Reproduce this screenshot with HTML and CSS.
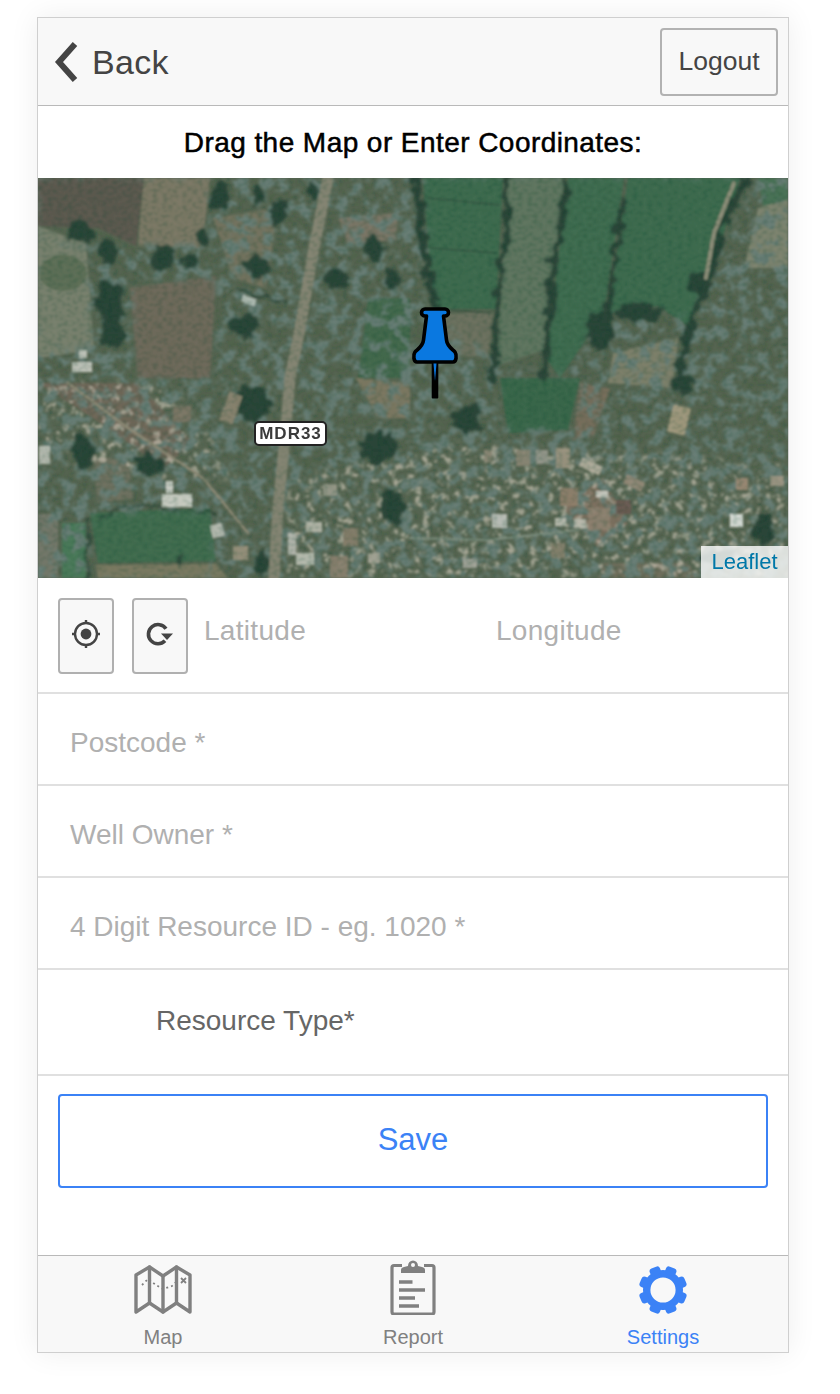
FILE: index.html
```html
<!DOCTYPE html>
<html lang="en">
<head>
<meta charset="utf-8">
<title>Add Resource</title>
<link rel="stylesheet" href="styles.css">
</head>
<body>
<div class="card">
  <header class="topbar">
    <a class="back">
      <svg class="back-icon" viewBox="0 0 26 44" width="26" height="44"><path d="M21 4 L5 22 L21 40" fill="none" stroke="#444" stroke-width="6"/></svg>
      <span>Back</span>
    </a>
    <button class="logout">Logout</button>
  </header>
  <h1 class="title">Drag the Map or Enter Coordinates:</h1>
  <div class="map">
    <svg class="sat" viewBox="0 0 750 400" width="750" height="400" preserveAspectRatio="none">
      <defs>
        <filter id="b1" x="-2%" y="-2%" width="104%" height="104%"><feGaussianBlur stdDeviation="1.1"/></filter>
        <filter id="b2" x="-20%" y="-20%" width="140%" height="140%"><feGaussianBlur stdDeviation="3.5"/></filter>
        <filter id="organic" x="-5%" y="-5%" width="110%" height="110%">
          <feTurbulence type="fractalNoise" baseFrequency="0.09" numOctaves="2" seed="11" result="n"/>
          <feDisplacementMap in="SourceGraphic" in2="n" scale="16" xChannelSelector="R" yChannelSelector="G"/>
          <feGaussianBlur stdDeviation="1.2"/>
        </filter>
        <filter id="dark" x="0" y="0" width="100%" height="100%">
          <feTurbulence type="fractalNoise" baseFrequency="0.08" numOctaves="4" seed="7"/>
          <feColorMatrix type="matrix" values="0 0 0 0 0.14  0 0 0 0 0.21  0 0 0 0 0.18  6 0 0 0 -2.85"/>
        </filter>
        <filter id="light" x="0" y="0" width="100%" height="100%">
          <feTurbulence type="fractalNoise" baseFrequency="0.13" numOctaves="3" seed="21"/>
          <feColorMatrix type="matrix" values="0 0 0 0 0.58  0 0 0 0 0.53  0 0 0 0 0.44  0 6 0 0 -3.2"/>
        </filter>
        <filter id="fine" x="0" y="0" width="100%" height="100%">
          <feTurbulence type="fractalNoise" baseFrequency="0.2 0.35" numOctaves="2" seed="3"/>
          <feColorMatrix type="matrix" values="0 0 0 0 0  0 0 0 0 0.05  0 0 0 0 0.02  0 0 4 0 -1.8"/>
        </filter>
        <mask id="treeMask">
          <rect width="750" height="400" fill="#fff"/>
          <g fill="#000" filter="url(#b2)">
            <polygon points="0,0 170,0 170,66 0,66"/>
            <polygon points="96,102 178,102 178,200 96,200"/>
            <polygon points="385,0 720,0 672,100 650,140 570,135 520,200 460,185 395,130"/>
            <polygon points="52,335 172,335 172,400 52,400"/>
            <polygon points="462,200 542,200 542,250 462,250"/>
            <polygon points="0,70 50,70 50,170 0,170"/>
          </g>
        </mask>
        <mask id="villageMask">
          <rect width="750" height="400" fill="#000"/>
          <g fill="#fff" filter="url(#b2)">
            <polygon points="420,265 750,285 750,400 250,400 250,300"/>
            <polygon points="0,205 130,205 200,300 120,300 0,280"/>
          </g>
        </mask>
      </defs>
      <rect width="750" height="400" fill="#566551"/>
      <g filter="url(#b1)">
        <g>
          <polygon points="0,0 106,0 98,68 60,50 0,48" fill="#5d5a50"/>
          <polygon points="106,0 172,0 164,70 100,68" fill="#7d7966"/>
          <polygon points="0,48 48,66 56,172 0,180" fill="#79816e"/>
          <ellipse cx="25" cy="95" rx="24" ry="18" fill="#5f7058"/>
          <polygon points="92,110 178,98 172,200 100,200" fill="#6f6a5b"/>
          <polygon points="175,40 240,30 228,110 195,100" fill="#74735f"/>
          <polygon points="300,40 360,35 358,62 310,66" fill="#7b7666"/>
          <polygon points="330,120 372,120 372,200 320,200" fill="#44694d"/>
          <polygon points="318,200 372,205 372,240 340,240" fill="#7d7862"/>
          <polygon points="385,0 465,0 458,131 395,131" fill="#3f6c50"/>
          <polygon points="470,0 527,0 506,172 458,188" fill="#607660"/>
          <polygon points="530,0 586,0 566,135 522,200 508,180" fill="#416d51"/>
          <polygon points="590,0 702,0 672,102 650,148 620,128 570,135" fill="#3f6c50"/>
          <polygon points="720,30 750,20 750,90 706,90" fill="#7e8470"/>
          <polygon points="720,0 750,0 750,22 725,28" fill="#4a7256"/>
          <polygon points="395,135 455,135 450,180 400,175" fill="#6e7260"/>
          <polygon points="575,175 640,160 635,210 570,205" fill="#7e806b"/>
          <polygon points="462,200 542,200 530,252 470,255" fill="#3b684b"/>
          <polygon points="542,205 572,210 556,258 535,262" fill="#776e5c"/>
          <polygon points="52,335 172,330 178,383 60,385" fill="#426d50"/>
          <polygon points="58,387 178,386 190,400 60,400" fill="#7b7a62"/>
          <polygon points="0,336 20,336 20,400 0,400" fill="#74786a"/>
          <polygon points="24,345 48,345 48,400 24,400" fill="#4b7a5a"/>
          <polygon points="0,205 100,205 155,265 125,290 70,250" fill="#6f6758"/>
          <polygon points="55,280 90,280 95,320 60,325" fill="#6f7160"/>
          <polygon points="565,385 650,385 660,400 560,400" fill="#6f6e5c"/>
          <polygon points="525,330 565,300 590,345 560,370" fill="#7d705f"/>
        </g>
        <rect width="750" height="400" filter="url(#light)" mask="url(#villageMask)" opacity=".7"/>
        <rect width="750" height="400" filter="url(#dark)" mask="url(#treeMask)"/>
        <g filter="url(#organic)" fill="#2b4539">
          <ellipse cx="42" cy="53" rx="15" ry="11"/><ellipse cx="125" cy="80" rx="11" ry="13"/><ellipse cx="152" cy="83" rx="8" ry="8"/>
          <ellipse cx="164" cy="60" rx="6" ry="9"/><ellipse cx="182" cy="17" rx="9" ry="15"/><ellipse cx="219" cy="17" rx="6" ry="10"/>
          <ellipse cx="240" cy="33" rx="8" ry="12"/><ellipse cx="275" cy="13" rx="5" ry="12"/><ellipse cx="219" cy="90" rx="12" ry="11"/>
          <ellipse cx="69" cy="73" rx="10" ry="12"/><ellipse cx="72" cy="123" rx="15" ry="20"/><ellipse cx="75" cy="155" rx="12" ry="18"/>
          <ellipse cx="205" cy="147" rx="15" ry="11"/><ellipse cx="335" cy="70" rx="9" ry="13"/><ellipse cx="299" cy="100" rx="12" ry="10"/>
          <ellipse cx="355" cy="103" rx="8" ry="9"/><ellipse cx="562" cy="152" rx="14" ry="20"/><ellipse cx="662" cy="107" rx="11" ry="13"/>
          <ellipse cx="600" cy="135" rx="24" ry="8"/><ellipse cx="430" cy="240" rx="14" ry="13"/><ellipse cx="645" cy="205" rx="12" ry="9"/>
          <ellipse cx="215" cy="225" rx="18" ry="17"/><ellipse cx="680" cy="380" rx="18" ry="7"/><ellipse cx="725" cy="350" rx="12" ry="16"/>
          <ellipse cx="45" cy="275" rx="10" ry="20"/><ellipse cx="340" cy="270" rx="20" ry="16"/><ellipse cx="355" cy="330" rx="12" ry="16"/>
          <ellipse cx="112" cy="286" rx="14" ry="10"/><ellipse cx="143" cy="382" rx="4" ry="6"/><ellipse cx="225" cy="385" rx="7" ry="15"/>
          <g fill="none" stroke="#2b4539" stroke-linecap="round" stroke-linejoin="round">
            <polyline stroke-width="6" points="469,0 469,60 462,83 459,133 455,200"/>
            <polyline stroke-width="7" points="529,0 525,37 515,83 512,133 505,200"/>
            <polyline stroke-width="6" points="585,23 579,60 572,113 569,133"/>
            <polyline stroke-width="8" points="379,0 385,67 395,117 400,135"/>
            <polyline stroke-width="8" points="709,0 682,50 675,93 655,140 639,200"/>
            <polyline stroke-width="3" points="200,112 250,125"/>
            <polyline stroke-width="2" points="60,340 90,325 130,332 175,335"/>
            <polyline stroke-width="3" points="50,340 50,400"/>
          </g>
        </g>
        <g fill="none" stroke="#33503f" stroke-width="1.4" opacity=".8">
          <polyline points="389,20 462,27"/><polyline points="392,70 459,75"/><polyline points="412,132 452,135"/>
        </g>
        <g fill="none" stroke-linecap="round">
          <polyline stroke="#858573" stroke-width="11" points="290,0 276,70 262,150 252,200 247,260 240,330 236,400"/>
          <polyline stroke="#8f8a76" stroke-width="2.5" points="30,205 90,250 165,300 210,355"/>
          <polyline stroke="#8f8f7a" stroke-width="4" points="696,5 676,55 668,100"/>
          <polyline stroke="#7f8f80" stroke-width="2" points="372,360 450,362 540,352"/>
        </g>
        <g opacity=".9">
          <rect x="632" y="228" width="18" height="28" rx="2" fill="#a89d82" transform="rotate(14 641 242)"/>
          <rect x="454" y="336" width="15" height="14" fill="#c3c6bf"/>
          <rect x="692" y="336" width="13" height="13" fill="#e4e7e2"/>
          <rect x="542" y="284" width="22" height="9" fill="#b8b3a2" transform="rotate(25 553 288)"/>
          <rect x="518" y="270" width="14" height="20" fill="#9f9682"/>
          <rect x="478" y="272" width="14" height="16" fill="#8d8775"/>
          <rect x="498" y="272" width="12" height="14" fill="#97998e"/>
          <rect x="586" y="300" width="20" height="10" fill="#988c7a" transform="rotate(25 596 305)"/>
          <rect x="698" y="300" width="12" height="12" fill="#a08c76"/>
          <rect x="732" y="298" width="14" height="10" fill="#a39a88"/>
          <rect x="558" y="313" width="12" height="6" fill="#cfcfc6"/>
          <rect x="522" y="310" width="18" height="18" fill="#93826e"/>
          <rect x="517" y="340" width="11" height="8" fill="#bfc0b4"/>
          <rect x="536" y="341" width="12" height="9" fill="#bfc0b4"/>
          <rect x="550" y="330" width="22" height="22" fill="#8f8270"/>
          <rect x="578" y="322" width="15" height="14" fill="#6d5a52"/>
          <rect x="513" y="365" width="14" height="15" fill="#88836f"/>
          <rect x="425" y="381" width="14" height="9" fill="#a6a89e"/>
          <rect x="446" y="272" width="8" height="12" fill="#8f8a78"/>
          <rect x="124" y="316" width="30" height="13" fill="#d4d6cd"/>
          <rect x="128" y="303" width="7" height="12" fill="#d8dad3"/>
          <rect x="1" y="268" width="11" height="18" fill="#bcc0b6"/>
          <rect x="173" y="346" width="12" height="13" fill="#bfc2b8" transform="rotate(-15 179 352)"/>
          <rect x="195" y="368" width="15" height="14" fill="#9e957f"/>
          <rect x="186" y="215" width="14" height="30" fill="#8e8672" transform="rotate(20 193 230)"/>
          <rect x="135" y="228" width="18" height="16" fill="#7d7766"/>
          <rect x="258" y="375" width="18" height="12" fill="#bfc2b6"/>
          <rect x="268" y="344" width="16" height="10" fill="#b8b9ac"/>
          <rect x="250" y="355" width="8" height="22" fill="#b9bcb3"/>
          <rect x="285" y="306" width="14" height="12" fill="#9a9b8c"/>
          <rect x="305" y="350" width="15" height="18" fill="#8a7f6c"/>
          <rect x="330" y="375" width="12" height="10" fill="#a8a698"/>
          <rect x="292" y="378" width="18" height="22" fill="#8c8270"/>
          <rect x="34" y="184" width="20" height="10" fill="#c9cbc2"/>
          <rect x="41" y="172" width="8" height="8" fill="#c9cbc2"/>
          <rect x="204" y="119" width="14" height="7" fill="#b9c4bd" transform="rotate(20 211 122)"/>
        </g>
        <rect width="750" height="400" filter="url(#fine)" opacity=".2"/>
      </g>
    </svg>
    <span class="shield">MDR33</span>
    <svg class="pin" viewBox="0 0 48 93" width="48" height="93">
      <rect x="20.7" y="54" width="6.6" height="38.5" rx="1" fill="#000"/>
      <path d="M14 3 H34 a3.4 3.4 0 0 1 0 7 H32.5 L35.5 34 C36 40 41 43 44 46 C46 49 45.5 56 42 56 H6 C2.5 56 2 49 4 46 C7 43 12 40 12.5 34 L15.5 10 H14 a3.4 3.4 0 0 1 0 -7 Z" fill="#0a78e0" stroke="#000" stroke-width="3.6" stroke-linejoin="round"/>
      <path d="M22.5 57.5 H25.5 L24 75 Z" fill="#0a78e0"/>
    </svg>
    <a class="attribution">Leaflet</a>
  </div>
  <div class="coords row">
    <button class="icon-btn">
      <svg viewBox="0 0 30 30" width="30" height="30"><g fill="none" stroke="#444" stroke-width="2.4"><circle cx="15" cy="15" r="11"/><path d="M15 1 V5 M15 25 V29 M1 15 H5 M25 15 H29"/></g><circle cx="15" cy="15" r="5.4" fill="#444"/></svg>
    </button>
    <button class="icon-btn">
      <svg viewBox="0 0 30 30" width="30" height="30"><path d="M20 21.8 A9.6 9.6 0 1 1 21 9.8" fill="none" stroke="#444" stroke-width="3.6"/><path d="M16 14.5 H28 L22 21 Z" fill="#444"/></svg>
    </button>
    <span class="ph lat">Latitude</span>
    <span class="ph lng">Longitude</span>
  </div>
  <div class="row field"><span class="ph">Postcode *</span></div>
  <div class="row field"><span class="ph">Well Owner *</span></div>
  <div class="row field"><span class="ph">4 Digit Resource ID - eg. 1020 *</span></div>
  <div class="row select"><span>Resource Type*</span></div>
  <div class="actions"><button class="save">Save</button></div>
  <nav class="tabs">
    <a class="tab">
      <svg viewBox="0 0 58 50" width="58" height="50">
        <g fill="none" stroke="#808080" stroke-width="3.4" stroke-linejoin="round" stroke-linecap="round">
          <path d="M2 10 L15.5 2 L29 11 L42.5 2 L56 10 V47 L42.5 38 L29 47 L15.5 38 L2 47 Z"/>
          <path d="M15.5 2 V38 M29 11 V47 M42.5 2 V38"/>
        </g>
        <path d="M8 20 L14 14 L22 20 L29 24 L38 21 L44 15" fill="none" stroke="#808080" stroke-width="1.8" stroke-dasharray="2 3"/>
        <path d="M47 13 L52 18 M52 13 L47 18" stroke="#808080" stroke-width="1.8"/>
      </svg>
      <span>Map</span>
    </a>
    <a class="tab">
      <svg viewBox="0 0 46 56" width="46" height="56">
        <path d="M12 6.5 H4 Q2 6.5 2 8.5 V53 Q2 55 4 55 H42 Q44 55 44 53 V8.5 Q44 6.5 42 6.5 H34" fill="none" stroke="#808080" stroke-width="3.2"/>
        <path d="M11 14 V11 Q11 8.5 14 8 L18 7 A5 5.5 0 0 1 28 7 L32 8 Q35 8.5 35 11 V14 Z" fill="#808080"/>
        <circle cx="23" cy="6" r="2" fill="#f8f8f8"/>
        <path d="M9 23 H22.5 M9 31 H35 M9 39 H25 M9 47 H29" stroke="#808080" stroke-width="3.6"/>
      </svg>
      <span>Report</span>
    </a>
    <a class="tab active">
      <svg viewBox="-25 -25 50 50" width="50" height="50">
        <circle r="16.3" fill="none" stroke="#3b82f6" stroke-width="7.4"/>
        <g fill="#3b82f6">
          <rect x="-5.5" y="-24.2" width="11" height="8" rx="3" transform="rotate(22.5)"/>
          <rect x="-5.5" y="-24.2" width="11" height="8" rx="3" transform="rotate(67.5)"/>
          <rect x="-5.5" y="-24.2" width="11" height="8" rx="3" transform="rotate(112.5)"/>
          <rect x="-5.5" y="-24.2" width="11" height="8" rx="3" transform="rotate(157.5)"/>
          <rect x="-5.5" y="-24.2" width="11" height="8" rx="3" transform="rotate(202.5)"/>
          <rect x="-5.5" y="-24.2" width="11" height="8" rx="3" transform="rotate(247.5)"/>
          <rect x="-5.5" y="-24.2" width="11" height="8" rx="3" transform="rotate(292.5)"/>
          <rect x="-5.5" y="-24.2" width="11" height="8" rx="3" transform="rotate(337.5)"/>
        </g>
      </svg>
      <span>Settings</span>
    </a>
  </nav>
</div>
</body>
</html>
```
FILE: styles.css
```css
* { box-sizing: border-box; }
html, body { margin: 0; padding: 0; }
body {
  width: 840px;
  height: 1394px;
  padding: 17px 0 0 37px;
  background: #fff;
  font-family: "Liberation Sans", Arial, sans-serif;
  overflow: hidden;
}
.card {
  width: 752px;
  height: 1336px;
  border: 1px solid #cfcfcf;
  background: #fff;
  display: flex;
  flex-direction: column;
  box-shadow: 0 0 28px rgba(0, 0, 0, .07);
}
.topbar {
  height: 88px;
  flex: none;
  display: flex;
  align-items: center;
  justify-content: space-between;
  padding: 0 10px 0 16px;
  background: #f8f8f8;
  border-bottom: 1px solid #b9b9b9;
}
.back {
  display: flex;
  align-items: center;
  gap: 12px;
  font-size: 34px;
  letter-spacing: .3px;
  color: #444;
}
.back span { padding-top: 2px; }
.back-icon { display: block; }
.logout {
  width: 118px;
  height: 68px;
  padding: 0;
  border: 2px solid #b2b2b2;
  border-radius: 4px;
  background: #f8f8f8;
  color: #444;
  font: 26.5px "Liberation Sans", Arial, sans-serif;
}
.title {
  height: 72px;
  flex: none;
  margin: 0;
  padding-top: 2px;
  display: flex;
  align-items: center;
  justify-content: center;
  color: #000;
  font-size: 28px;
  font-weight: 400;
  letter-spacing: .44px;
  -webkit-text-stroke: 0.5px #000;
}
.map {
  position: relative;
  height: 400px;
  flex: none;
  overflow: hidden;
  background: #566551;
}
.sat { display: block; }
.shield {
  position: absolute;
  left: 216px;
  top: 243px;
  width: 73px;
  height: 25px;
  display: flex;
  align-items: center;
  justify-content: center;
  background: #fff;
  border: 2px solid #222;
  border-radius: 5px;
  color: #3a3a3a;
  font-size: 17px;
  font-weight: 700;
  letter-spacing: 1px;
  filter: blur(.4px);
}
.pin {
  position: absolute;
  left: 373px;
  top: 128px;
}
.attribution {
  position: absolute;
  right: 0;
  bottom: 0;
  width: 87px;
  height: 32px;
  display: flex;
  align-items: center;
  justify-content: center;
  background: rgba(255, 255, 255, .8);
  color: #0078a8;
  font-size: 22px;
}
.row {
  flex: none;
  display: flex;
  align-items: center;
  border-bottom: 2px solid #e0e0e0;
}
.coords {
  height: 116px;
  padding: 2px 0 0 20px;
}
.icon-btn {
  width: 56px;
  height: 76px;
  padding: 0 0 4px;
  display: flex;
  align-items: center;
  justify-content: center;
  border: 2px solid #b0b0b0;
  border-radius: 4px;
  background: #f8f8f8;
  margin-right: 18px;
}
.icon-btn + .icon-btn { margin-right: 16px; }
.icon-btn svg { display: block; }
.ph {
  color: #b0b0b0;
  font-size: 28px;
}
.lat, .lng {
  margin-bottom: 10px;
  letter-spacing: .3px;
}
.lat { width: 292px; }
.field {
  height: 92px;
  padding: 8px 0 0 32px;
}
.select {
  height: 106px;
  padding: 0 0 2px 118px;
  color: #666;
  font-size: 28px;
}
.actions {
  flex: 1;
  padding: 18px 20px 0;
}
.save {
  display: block;
  width: 710px;
  height: 94px;
  padding: 0 0 2px;
  border: 2px solid #3b82f6;
  border-radius: 4px;
  background: #fff;
  color: #3b82f6;
  font: 31px "Liberation Sans", Arial, sans-serif;
}
.tabs {
  height: 97px;
  flex: none;
  display: flex;
  background: #f8f8f8;
  border-top: 1px solid #b9b9b9;
}
.tab {
  flex: 1;
  display: flex;
  flex-direction: column;
  align-items: center;
  justify-content: flex-end;
  padding-bottom: 3px;
  color: #808080;
  font-size: 20px;
  gap: 11px;
}
.tab svg { display: block; }
.active { color: #3b82f6; }
```
